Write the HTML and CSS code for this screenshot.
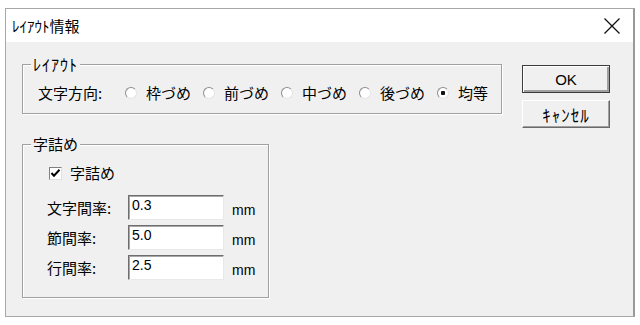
FILE: index.html
```html
<!DOCTYPE html>
<html lang="ja">
<head>
    <meta charset="UTF-8">
    <title>ﾚｲｱｳﾄ情報</title>
    <link rel="stylesheet" href="styles.css">
</head>
<body>
    <div class="window">
        <div class="titlebar">
            <span class="title">ﾚｲｱｳﾄ情報</span>
            <svg class="close" width="18" height="18" viewBox="0 0 18 18">
                <path d="M1.5 1.5 L16.5 16.5 M16.5 1.5 L1.5 16.5" stroke="#111" stroke-width="1.3" fill="none"/>
            </svg>
        </div>
        <div class="content">
            <div class="left">
                <div class="group group-layout">
                    <span class="legend">ﾚｲｱｳﾄ</span>
                    <div class="dir-row">
                        <span class="dir-label">文字方向:</span>
                        <label class="opt"><input type="radio" name="dir"><span>枠づめ</span></label>
                        <label class="opt"><input type="radio" name="dir"><span>前づめ</span></label>
                        <label class="opt"><input type="radio" name="dir"><span>中づめ</span></label>
                        <label class="opt"><input type="radio" name="dir"><span>後づめ</span></label>
                        <label class="opt"><input type="radio" name="dir" checked><span>均等</span></label>
                    </div>
                </div>
                <div class="group group-pitch">
                    <span class="legend">字詰め</span>
                    <div class="check-row">
                        <span class="checkbox">
                            <svg width="11" height="11" viewBox="0 0 11 11">
                                <path d="M1.5 5 L4 7.8 L9.5 1.8" stroke="#000" stroke-width="2" fill="none"/>
                            </svg>
                        </span>
                        <span>字詰め</span>
                    </div>
                    <div class="fields">
                        <span class="field-label">文字間率:</span>
                        <input class="field" type="text" value="0.3">
                        <span class="unit">mm</span>
                        <span class="field-label">節間率:</span>
                        <input class="field" type="text" value="5.0">
                        <span class="unit">mm</span>
                        <span class="field-label">行間率:</span>
                        <input class="field" type="text" value="2.5">
                        <span class="unit">mm</span>
                    </div>
                </div>
            </div>
            <div class="buttons">
                <button class="btn btn-default">OK</button>
                <button class="btn btn-kana">ｷｬﾝｾﾙ</button>
            </div>
        </div>
    </div>
</body>
</html>
```

FILE: styles.css
```css
body {
    margin: 0;
    background: #fff;
    font-family: "Liberation Sans", "Noto Sans CJK JP", sans-serif;
    font-size: 15px;
    line-height: 20px;
    color: #000;
}
.window {
    box-sizing: border-box;
    width: 630px;
    height: 309px;
    margin: 8px 0 0 5px;
    border: 1px solid #a8a8a8;
    border-right: 2px solid #999;
    background: #f0f0f0;
}
.titlebar {
    height: 33px;
    background: #fff;
    display: flex;
    align-items: center;
    padding: 0 12px 0 6px;
}
.title {
    font-family: "Noto Sans CJK JP", sans-serif;
    font-size: 15px;
}
.close {
    margin-left: auto;
}
.content {
    display: flex;
    gap: 20px;
    padding: 22px 0 0 16px;
}
.left {
    display: flex;
    flex-direction: column;
    gap: 30px;
}
.group {
    position: relative;
    box-sizing: border-box;
    border: 1px solid #a0a0a0;
    box-shadow: inset 1px 1px #fff, 1px 1px #fff;
}
.legend {
    position: absolute;
    top: -10px;
    left: 8px;
    padding: 0 2px;
    line-height: 18px;
    background: #f0f0f0;
    font-family: "Noto Sans CJK JP", sans-serif;
}
.group-layout .legend {
    font-size: 16px;
    letter-spacing: 1px;
}
.group-layout {
    width: 480px;
    height: 50px;
    padding: 18px 0 0 15px;
}
.dir-row {
    display: flex;
    align-items: center;
    gap: 12px;
    font-family: "Noto Sans CJK JP", sans-serif;
}
.dir-label {
    width: 75px;
}
.opt {
    display: flex;
    align-items: center;
    gap: 9px;
}
.opt input {
    appearance: none;
    -webkit-appearance: none;
    margin: 0;
    width: 12px;
    height: 12px;
    border-radius: 50%;
    border: 1px solid;
    border-color: #8c8c8c #e4e4e4 #e4e4e4 #8c8c8c;
    background: #fff;
}
.opt input:checked {
    background: radial-gradient(circle, #111 0 2px, #fff 2.5px);
}
.group-pitch {
    width: 247px;
    height: 154px;
    padding: 18px 0 0 24px;
}
.check-row {
    display: flex;
    align-items: center;
    gap: 8px;
    margin-left: 2px;
    font-family: "Noto Sans CJK JP", sans-serif;
}
.checkbox {
    box-sizing: border-box;
    width: 13px;
    height: 13px;
    display: flex;
    align-items: center;
    justify-content: center;
    background: #fff;
    border: 1px solid;
    border-color: #808080 #e0e0e0 #e0e0e0 #808080;
}
.fields {
    display: grid;
    grid-template-columns: 73px 96px auto;
    grid-auto-rows: 25px;
    column-gap: 8px;
    row-gap: 5px;
    margin-top: 12px;
}
.field-label {
    align-self: center;
    font-family: "Noto Sans CJK JP", sans-serif;
}
.field {
    box-sizing: border-box;
    width: 96px;
    height: 25px;
    margin: 0;
    padding: 1px 3px 7px;
    font-family: "Liberation Sans", sans-serif;
    font-size: 14px;
    border: 1px solid;
    border-color: #6e6e6e #e8e8e8 #e8e8e8 #6e6e6e;
    box-shadow: inset 1px 1px #a8a8a8;
    background: #fff;
    color: #000;
    outline: none;
}
.unit {
    align-self: center;
    margin-top: 4px;
    font-size: 14px;
}
.buttons {
    display: flex;
    flex-direction: column;
    gap: 7px;
    margin-top: 1px;
}
.btn {
    box-sizing: border-box;
    width: 88px;
    height: 28px;
    padding: 0;
    font-family: "Liberation Sans", "Noto Sans CJK JP", sans-serif;
    font-size: 15px;
    color: #000;
    background: #f0f0f0;
    border: 1px solid;
    border-color: #fff #696969 #696969 #fff;
    box-shadow: inset -1px -1px #a0a0a0;
}
.btn-default {
    border: 1px solid #3c3c3c;
    box-shadow: inset 1px 1px #fff, inset -2px -2px #a0a0a0;
}
.btn-kana {
    font-size: 17px;
    letter-spacing: 1px;
}
```
